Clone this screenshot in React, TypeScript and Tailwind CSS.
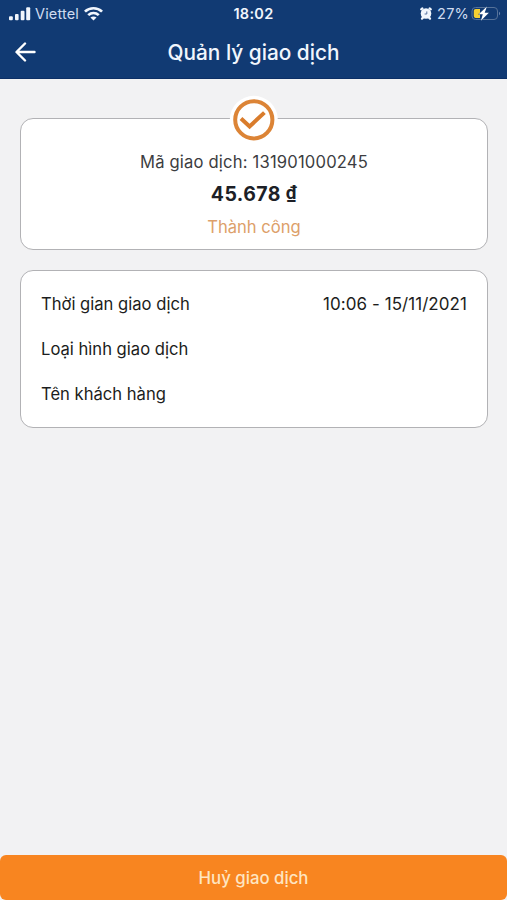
type RowProps = { label: string; value?: string };

function SignalIcon() {
  return (
    <svg width="22" height="14" viewBox="0 0 22 14" fill="#f1f6fd">
      <rect x="0" y="9.2" width="3.8" height="4" rx="1" />
      <rect x="6" y="7" width="3.6" height="6.2" rx="1" />
      <rect x="11.7" y="3.8" width="3.8" height="9.4" rx="1" />
      <rect x="17.2" y="0.3" width="4" height="12.9" rx="1" />
    </svg>
  );
}

function WifiIcon() {
  return (
    <svg width="19" height="14" viewBox="0 0 18 14" preserveAspectRatio="none" fill="none" stroke="#f1f6fd" strokeWidth="2.6">
      <path d="M0.9 4.6C5.5 0.2 12.5 0.2 17.1 4.6" />
      <path d="M4 8.1C7 5.3 11 5.3 14 8.1" />
      <path d="M9 13.6L6.1 10.6C7.8 9.1 10.2 9.1 11.9 10.6Z" fill="#f1f6fd" stroke="none" />
    </svg>
  );
}

function AlarmIcon() {
  return (
    <svg width="12" height="13" viewBox="0 0 12 13" fill="none" stroke="#f1f6fd" strokeLinecap="round">
      <path d="M1.2 2.4L2.4 1.4M10.8 2.4L9.6 1.4M2 11.6L3.2 10.4M10 11.6L8.8 10.4" strokeWidth="2.2" />
      <circle cx="6" cy="6.5" r="5.3" fill="#f1f6fd" stroke="none" />
      <path d="M6.8 4.8V7H5" stroke="#54719f" strokeWidth="1" />
    </svg>
  );
}

function BatteryIcon() {
  return (
    <svg width="30" height="16" viewBox="0 0 30 16">
      <rect x="1" y="1.5" width="25.5" height="12" rx="3.5" fill="none" stroke="#567299" />
      <path d="M28 5.7C29.5 6.3 29.5 8.7 28 9.3Z" fill="#6583ae" />
      <path d="M4.7 3.1H9V11.9H4.7C3.5 11.9 2.8 11.2 2.8 10.1V4.9C2.8 3.8 3.5 3.1 4.7 3.1Z" fill="#f5cf32" />
      <path d="M15.9 0.5L7.7 8.2H11.8L9.9 14.7L17.9 6.7H13.7Z" fill="#fff" stroke="#123a72" strokeWidth="0.8" paintOrder="stroke" />
    </svg>
  );
}

function Row({ label, value }: RowProps) {
  return (
    <div className="flex h-[45px] items-center justify-between">
      <span className="text-[16.6px]">{label}</span>
      {value && <span className="text-[17px] tracking-[0.06px]">{value}</span>}
    </div>
  );
}

export default function App() {
  return (
    <div className="flex h-[900px] w-[507px] flex-col overflow-hidden bg-[#f2f2f3] font-['Inter','Liberation_Sans',sans-serif]">
      {/* Header */}
      <header className="h-[79px] shrink-0 border-b border-[#0c2f66] bg-[#113a73] text-[#f1f6fd]">
        <div className="grid h-[27px] grid-cols-3 items-center text-[14px] leading-4">
          <div className="flex items-center pl-[9px]">
            <SignalIcon />
            <span className="ml-1 mr-[5px] pt-px text-[14.5px] tracking-[0.15px] text-[#cfdcf0]">Viettel</span>
            <WifiIcon />
          </div>
          <span className="pt-px text-center text-[14.5px] font-semibold tracking-[0.3px]">18:02</span>
          <div className="flex items-center justify-end pr-[6px]">
            <AlarmIcon />
            <span className="ml-[5px] mr-0.5 pt-px text-[14.5px] tracking-[0.2px] text-[#cfdcf0]">27%</span>
            <BatteryIcon />
          </div>
        </div>
        <div className="grid h-[50px] grid-cols-[60px_1fr_60px] items-center">
          <button aria-label="Back" className="pl-[15px]">
            <svg width="22" height="22" viewBox="0 0 22 22" fill="none" stroke="#fff" strokeWidth="2.4" strokeLinecap="round" strokeLinejoin="round">
              <path d="M19.5 11H2M10 2.5L1.5 11L10 19.5" />
            </svg>
          </button>
          <h1 className="pt-0.5 text-center text-[20.8px] font-medium">Quản lý giao dịch</h1>
        </div>
      </header>

      {/* Content */}
      <main className="flex flex-1 flex-col gap-5 pt-[39px] pr-[19px] pl-5 text-[#1c1d20]">
        <section className="relative flex h-[132px] flex-col items-center rounded-[13px] border-[1.5px] border-[#b2b2b5] bg-white pt-[30px]">
          <svg className="absolute -top-[24px] left-[208px]" width="50" height="50" viewBox="0 0 50 50" fill="none">
            <circle cx="24.8" cy="24.8" r="24" fill="#fff" />
            <circle cx="24.8" cy="24.8" r="18.6" stroke="#dc8436" strokeWidth="4" />
            <path d="M12 23.5L20.6 31.5L35.4 17.6" stroke="#d97c2c" strokeWidth="4" />
          </svg>
          <p className="text-[16.6px] leading-[26px] tracking-[0.18px] text-[#3c3d41]">Mã giao dịch: 131901000245</p>
          <p className="mt-[5px] h-7 text-[19.5px] leading-7 font-bold tracking-[0.4px] text-[#1d1f27]">
            45.678 <span className="align-[2px] font-['Roboto',sans-serif] text-[19px] leading-none">₫</span>
          </p>
          <p className="mt-[7px] text-[16.6px] leading-6 text-[#dda06a]">Thành công</p>
        </section>

        <section className="h-[158px] rounded-[13px] border-[1.5px] border-[#b2b2b5] bg-white px-5 pt-[11px]">
          <Row label="Thời gian giao dịch" value="10:06 - 15/11/2021" />
          <Row label="Loại hình giao dịch" />
          <Row label="Tên khách hàng" />
        </section>
      </main>

      {/* Footer */}
      <button className="h-[45px] shrink-0 rounded-md bg-[#f88520] pt-0.5 text-[16.8px] font-medium text-[#fee5c2]">
        Huỷ giao dịch
      </button>
    </div>
  );
}
